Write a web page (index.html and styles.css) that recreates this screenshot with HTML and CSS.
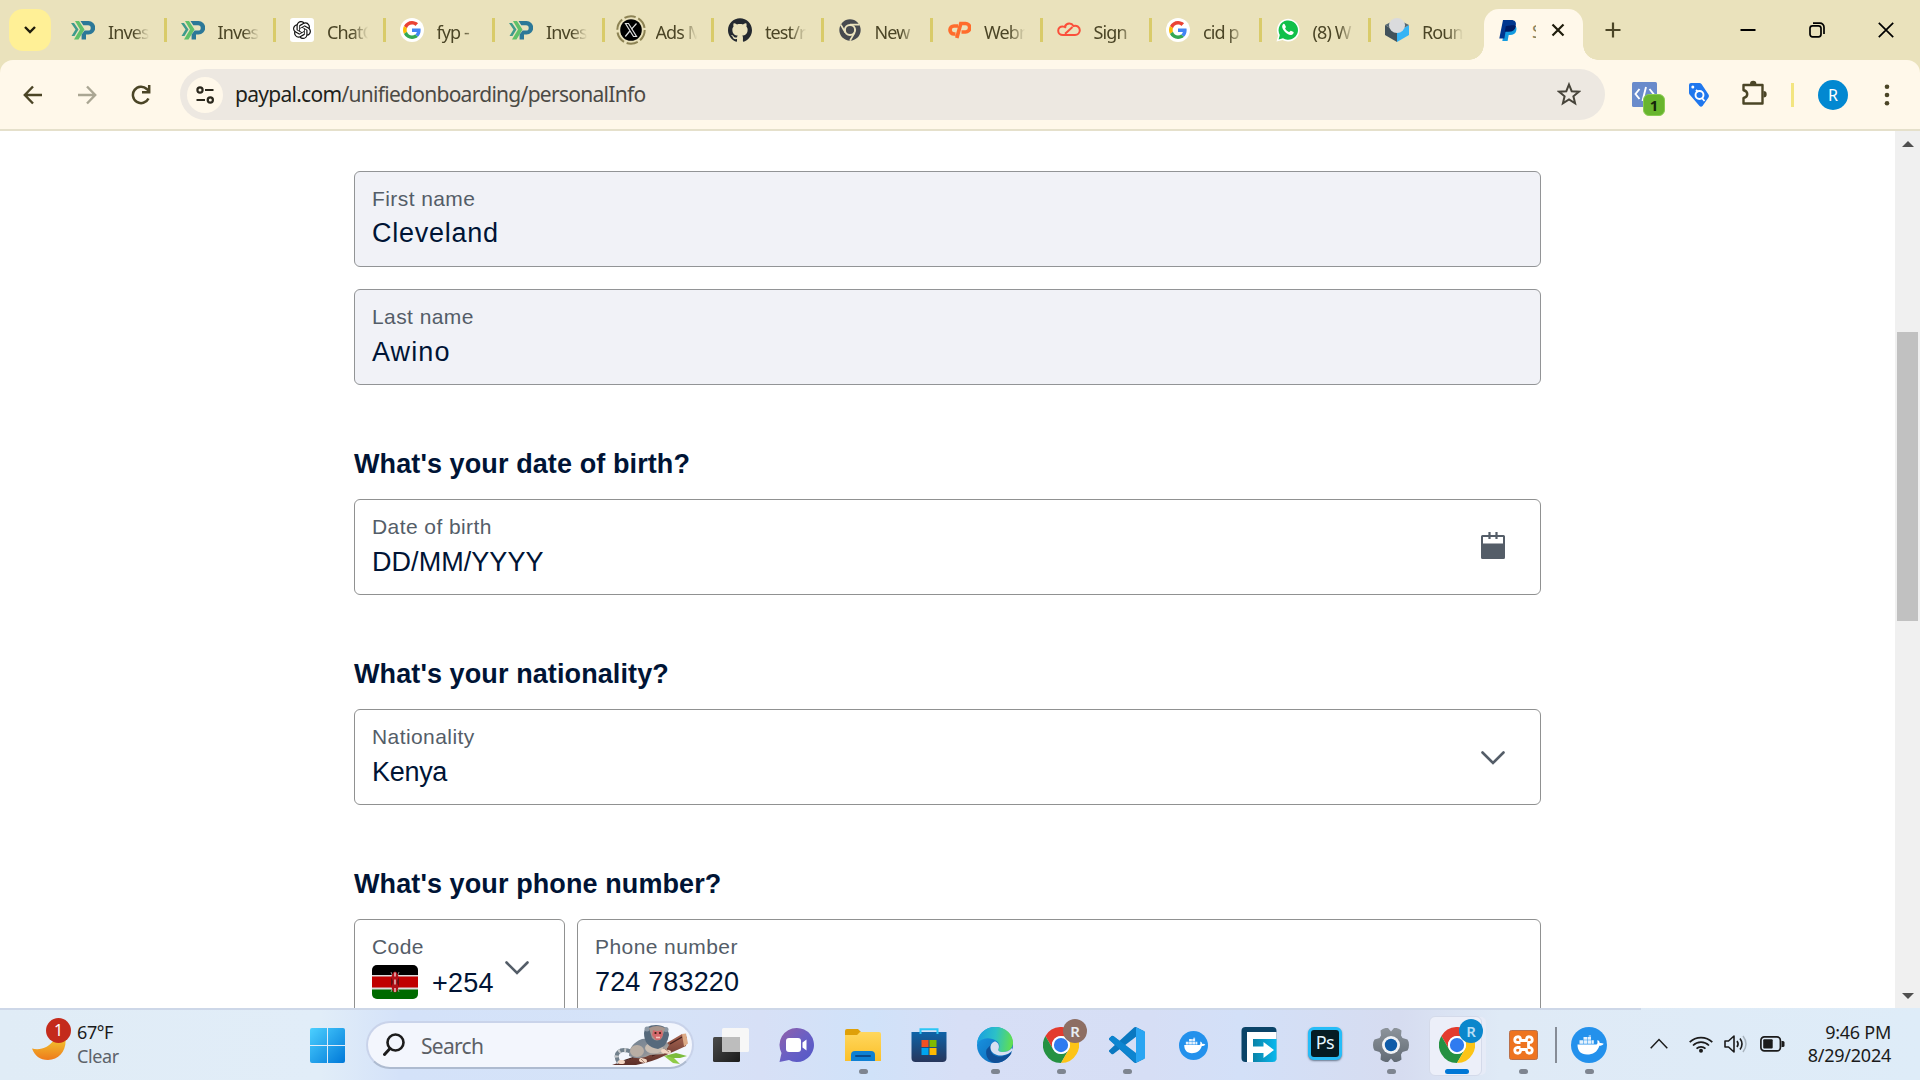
FILE: index.html
```html
<!DOCTYPE html>
<html lang="en">
<head>
<meta charset="utf-8">
<title>PayPal - Personal info</title>
<link rel="stylesheet" href="styles.css">
</head>
<body>
<svg class="defs" width="0" height="0" aria-hidden="true">
  <defs>
    <linearGradient id="g-win" x1="0" y1="0" x2="1" y2="1"><stop offset="0" stop-color="#4cd0ff"/><stop offset="1" stop-color="#0078d8"/></linearGradient>
    <linearGradient id="g-moon" x1="0" y1="0" x2="0" y2="1"><stop offset="0" stop-color="#f2c22e"/><stop offset="1" stop-color="#ee7b1c"/></linearGradient>
    <linearGradient id="g-chat" x1="0" y1="0" x2="1" y2="1"><stop offset="0" stop-color="#9360a8"/><stop offset=".5" stop-color="#6a5fc4"/><stop offset="1" stop-color="#5258c8"/></linearGradient>
    <linearGradient id="g-folder" x1="0" y1="0" x2="0" y2="1"><stop offset="0" stop-color="#ffd75e"/><stop offset="1" stop-color="#fbc02a"/></linearGradient>
    <linearGradient id="g-store" x1="0" y1="0" x2="0" y2="1"><stop offset="0" stop-color="#0f63a8"/><stop offset="1" stop-color="#27365c"/></linearGradient>
    <linearGradient id="g-edge-a" x1="0" y1=".4" x2="1" y2=".5"><stop offset="0" stop-color="#1a9fe0"/><stop offset=".5" stop-color="#2cc0c8"/><stop offset="1" stop-color="#62e04c"/></linearGradient>
    <linearGradient id="g-edge-b" x1="0" y1="0" x2="1" y2="1"><stop offset="0" stop-color="#1a9be8"/><stop offset="1" stop-color="#0c5fae"/></linearGradient>
    <linearGradient id="g-fx" x1="0" y1="0" x2="1" y2="0"><stop offset="0" stop-color="#0a83a8"/><stop offset="1" stop-color="#08b8ee"/></linearGradient>
    <linearGradient id="g-dark" x1="0" y1="0" x2="1" y2="1"><stop offset="0" stop-color="#4b4b4b"/><stop offset="1" stop-color="#1b1b1b"/></linearGradient>
    <linearGradient id="g-gear" x1="0" y1="0" x2="0" y2="1"><stop offset="0" stop-color="#8d949b"/><stop offset="1" stop-color="#626b75"/></linearGradient>
    <linearGradient id="g-bark" x1="0" y1="0" x2="0" y2="1"><stop offset="0" stop-color="#a86552"/><stop offset="1" stop-color="#5c2f28"/></linearGradient>
    <linearGradient id="g-fur" x1="0" y1="0" x2="1" y2="1"><stop offset="0" stop-color="#6f8091"/><stop offset=".6" stop-color="#8d9198"/><stop offset="1" stop-color="#e0c5a8"/></linearGradient>
  </defs>
  <symbol id="i-invest" viewBox="0 0 24 24">
    <path d="M0 5h3l4.500 6.500L3.500 18H.5l4-6.500z" fill="#3f9a8c"/><path d="M4 3h4l5.500 8.500L7.500 21.500H3l6-10z" fill="#5fc06a"/>
    <path d="M9.500 3H17.500a6.700 6.700 0 0 1 0 13.400H15V21.500h-4.400v-5l3-4h3.500a2.600 2.600 0 0 0 0-5.200H12.300z" fill="#2c7898"/>
  </symbol>
  <symbol id="i-gpt" viewBox="-4 -4 32 32">
    <rect x="-4" y="-4" width="32" height="32" rx="4" fill="#fff"/>
    <path fill="#111" d="M22.2819 9.8211a5.9847 5.9847 0 0 0-.5157-4.9108 6.0462 6.0462 0 0 0-6.5098-2.9A6.0651 6.0651 0 0 0 4.9807 4.1818a5.9847 5.9847 0 0 0-3.9977 2.9 6.0462 6.0462 0 0 0 .7427 7.0966 5.98 5.98 0 0 0 .511 4.9107 6.051 6.051 0 0 0 6.5146 2.9001A5.9847 5.9847 0 0 0 13.2599 24a6.0557 6.0557 0 0 0 5.7718-4.2058 5.9894 5.9894 0 0 0 3.9977-2.9001 6.0557 6.0557 0 0 0-.7475-7.0729zm-9.022 12.6081a4.4755 4.4755 0 0 1-2.8764-1.0408l.1419-.0804 4.7783-2.7582a.7948.7948 0 0 0 .3927-.6813v-6.7369l2.02 1.1686a.071.071 0 0 1 .038.052v5.5826a4.504 4.504 0 0 1-4.4945 4.4944zm-9.6607-4.1254a4.4708 4.4708 0 0 1-.5346-3.0137l.142.0852 4.783 2.7582a.7712.7712 0 0 0 .7806 0l5.8428-3.3685v2.3324a.0804.0804 0 0 1-.0332.0615L9.74 19.9502a4.4992 4.4992 0 0 1-6.1408-1.6464zM2.3408 7.8956a4.485 4.485 0 0 1 2.3655-1.9728V11.6a.7664.7664 0 0 0 .3879.6765l5.8144 3.3543-2.0201 1.1685a.0757.0757 0 0 1-.071 0l-4.8303-2.7865A4.504 4.504 0 0 1 2.3408 7.872zm16.5963 3.8558L13.1038 8.364 15.1192 7.2a.0757.0757 0 0 1 .071 0l4.8303 2.7913a4.4944 4.4944 0 0 1-.6765 8.1042v-5.6772a.79.79 0 0 0-.407-.667zm2.0107-3.0231l-.142-.0852-4.7735-2.7818a.7759.7759 0 0 0-.7854 0L9.409 9.2297V6.8974a.0662.0662 0 0 1 .0284-.0615l4.8303-2.7866a4.4992 4.4992 0 0 1 6.6802 4.66zM8.3065 12.863l-2.02-1.1638a.0804.0804 0 0 1-.038-.0567V6.0742a4.4992 4.4992 0 0 1 7.3757-3.4537l-.142.0805L8.704 5.459a.7948.7948 0 0 0-.3927.6813zm1.0976-2.3654l2.602-1.4998 2.6069 1.4998v2.9994l-2.5974 1.4997-2.6067-1.4997Z"/>
  </symbol>
  <symbol id="i-google" viewBox="-8 -8 64 64">
    <circle cx="24" cy="24" r="32" fill="#fff"/>
    <path fill="#EA4335" d="M24 9.500c3.540 0 6.710 1.220 9.210 3.600l6.850-6.850C35.900 2.380 30.470 0 24 0 14.620 0 6.510 5.380 2.560 13.220l7.980 6.190C12.430 13.720 17.740 9.500 24 9.500z"/>
    <path fill="#4285F4" d="M46.980 24.550c0-1.570-.15-3.090-.38-4.550H24v9.020h12.940c-.58 2.960-2.260 5.480-4.780 7.180l7.730 6c4.510-4.180 7.090-10.360 7.090-17.650z"/>
    <path fill="#FBBC05" d="M10.530 28.590c-.48-1.450-.76-2.990-.76-4.590s.27-3.140.76-4.590l-7.980-6.190C.92 16.460 0 20.120 0 24c0 3.880.92 7.540 2.560 10.780l7.970-6.190z"/>
    <path fill="#34A853" d="M24 48c6.480 0 11.930-2.130 15.890-5.810l-7.730-6c-2.150 1.450-4.920 2.300-8.160 2.300-6.260 0-11.570-4.220-13.470-9.910l-7.980 6.190C6.510 42.620 14.620 48 24 48z"/>
  </symbol>
  <symbol id="i-x" viewBox="0 0 30 30">
    <circle cx="15" cy="15" r="13.700" fill="none" stroke="#8d8354" stroke-width="2" stroke-dasharray="11.500 2.850"/>
    <circle cx="15" cy="15" r="10.800" fill="#000"/>
    <path d="M9.500 8.500h3l8 13h-3z" fill="none" stroke="#ddd" stroke-width="1.200"/><path d="M20.500 8.500l-5 5.600M13.800 16l-4.500 5.500" stroke="#ddd" stroke-width="1.200"/>
  </symbol>
  <symbol id="i-github" viewBox="0 0 24 24">
    <path fill="#24292f" d="M12 .297c-6.630 0-12 5.373-12 12 0 5.303 3.438 9.800 8.205 11.385.6.113.82-.258.82-.577 0-.285-.01-1.040-.015-2.040-3.338.724-4.042-1.610-4.042-1.610C4.422 18.070 3.633 17.700 3.633 17.700c-1.087-.744.084-.729.084-.729 1.205.084 1.838 1.236 1.838 1.236 1.070 1.835 2.809 1.305 3.495.998.108-.776.417-1.305.76-1.605-2.665-.3-5.466-1.332-5.466-5.930 0-1.310.465-2.380 1.235-3.220-.135-.303-.54-1.523.105-3.176 0 0 1.005-.322 3.300 1.230.96-.267 1.980-.399 3-.405 1.020.006 2.040.138 3 .405 2.280-1.552 3.285-1.230 3.285-1.230.645 1.653.24 2.873.12 3.176.765.84 1.230 1.910 1.230 3.220 0 4.610-2.805 5.625-5.475 5.920.42.36.81 1.096.81 2.220 0 1.606-.015 2.896-.015 3.286 0 .315.21.69.825.57C20.565 22.092 24 17.592 24 12.297c0-6.627-5.373-12-12-12"/>
  </symbol>
  <symbol id="i-chrome-mono" viewBox="-3 -3 54 54">
    <circle cx="24" cy="24" r="24" fill="#474a4f"/>
    <circle cx="24" cy="24" r="11.500" fill="none" stroke="#ebe3be" stroke-width="4.500"/>
    <path d="M24 12H45M13.600 30L3.200 12M34.400 30L24 48" stroke="#ebe3be" stroke-width="4"/>
  </symbol>
  <symbol id="i-cpanel" viewBox="0 0 24 24">
    <path d="M11 8H7a4 4 0 0 0 0 8h1.500M9.800 20l4-14.500h4.700a3.600 3.600 0 0 1 0 8.500H14.500" fill="none" stroke="#ff6c2c" stroke-width="3.700"/>
  </symbol>
  <symbol id="i-cloud" viewBox="0 0 24 24">
    <path d="M15.500 9c-2.500 2-4.500 4.500-7.500 6.800M8 8.500C9.500 4.800 14.500 4.500 16.500 8c3.500-1 6.300 1.200 6.300 4.300 0 2.700-2 4.700-4.800 4.700H6C3 17 1.200 15 1.200 12.700 1.200 10 3.200 8.300 6 8.500c1 0 2 .3 3 1.300" fill="none" stroke="#fb4f3a" stroke-width="2"/>
  </symbol>
  <symbol id="i-whatsapp" viewBox="0 0 24 24">
    <path d="M.5 23.500l1.700-6A11.300 11.300 0 1 1 6.600 22z" fill="#fff"/>
    <path d="M2.600 21.500l1.200-4.600A9.700 9.700 0 1 1 7 20.300z" fill="#10c049"/>
    <path d="M8.800 6.500c-.5-1-1-.8-1.500-.4-2.500 2.400-.2 5.800 1.500 7.600 1.900 2 4.300 3.600 6.500 3.300 1.800-.3 2.600-1.900 2.300-2.900l-2.700-1.400c-.6-.2-1.200 1.300-1.700 1.300-.9 0-3.700-2.300-4.100-3.500 0-.5 1-1.300.8-1.800z" fill="#fff"/>
  </symbol>
  <symbol id="i-cube" viewBox="0 0 24 24">
    <path d="M0 7l12 7v10L0 17z" fill="#42525b"/><path d="M24 7l-12 7v10l12-7z" fill="#36b4f5"/><path d="M0 7l6-3 12 0 6 3-12 7z" fill="#566873"/>
    <ellipse cx="12" cy="7.500" rx="8" ry="7.500" fill="#dadbdd"/>
  </symbol>
  <symbol id="i-paypal" viewBox="0 0 24 24">
    <path d="M9.500 7h8c3.300.7 3.400 4 2.600 6.200-.8 2.600-3 3.800-6 3.800h-1.400L11.600 23H6.300z" fill="#139be0"/>
    <path d="M7 2h8.200c3.600 0 5.300 2.100 4.600 5.300-.8 3.800-3.300 5.500-7 5.500H9.700L8.400 20.500H3.300z" fill="#00368f"/>
    <path d="M9.800 8.200l-1 5.600h3.800c4 0 6.500-1.900 7.200-5.600-1-1.200-3-1.300-10-0z" fill="#001c64"/>
  </symbol>
  <symbol id="i-chrome" viewBox="0 0 48 48">
    <path d="M24 12H44.800A24 24 0 0 0 3.200 12L13.600 30A12 12 0 0 1 24 12z" fill="#e33b2e"/>
    <path d="M13.600 30L3.200 12A24 24 0 0 0 24 48L34.400 30A12 12 0 0 1 13.600 30z" fill="#259142"/>
    <path d="M34.400 30L24 48A24 24 0 0 0 44.800 12H24A12 12 0 0 1 34.400 30z" fill="#fcc417"/>
    <circle cx="24" cy="24" r="12" fill="#fff"/><circle cx="24" cy="24" r="9.500" fill="#2f7bf0"/>
  </symbol>
  <symbol id="i-docker" viewBox="0 0 36 36">
    <circle cx="18" cy="18" r="18" fill="#2391ec"/>
    <path d="M6.500 17.500h18.800c.8-.3 1.300-1.100 1.200-2.300-.1-.9-.3-1.500.3-2.200 1.300.8 1.900 1.800 1.900 3 1.300-.2 2.600 0 4 .7-1 1.500-2.500 2-4.300 2-2.200 6.500-6.400 8.800-12.400 8.800-6.200 0-9.500-3.500-9.500-10z" fill="#fff"/>
    <path d="M8.500 13.200h3.500v3.500H8.500zM12.500 13.200H16v3.500h-3.500zM16.500 13.200H20v3.500h-3.500zM20.500 13.200h2.300v3.500h-2.300zM12.500 10H16v2.700h-3.500zM16.500 10H20v2.700h-3.500zM17.700 8.500H20v1h-2.300z" fill="#e6f2fd"/>
  </symbol>
  <symbol id="i-chevron" viewBox="0 0 24 14"><path d="M1.500 1.500L12 12 22.500 1.500" fill="none" stroke="#545d68" stroke-width="2.600" stroke-linecap="round"/></symbol>
</svg>

<div class="screen">
  <header class="tabstrip">
    <button class="tabsearch"><svg width="14" height="10" viewBox="0 0 14 10"><path d="M2 2l5 5 5-5" fill="none" stroke="#1f1c0c" stroke-width="2.400"/></svg></button>
    <nav class="tabs">
      <div class="tab"><svg class="fav"><use href="#i-invest"/></svg><span>Inves</span></div>
      <div class="tab"><svg class="fav"><use href="#i-invest"/></svg><span>Inves</span></div>
      <div class="tab"><svg class="fav"><use href="#i-gpt"/></svg><span>ChatG</span></div>
      <div class="tab"><svg class="fav"><use href="#i-google"/></svg><span>fyp -</span></div>
      <div class="tab"><svg class="fav"><use href="#i-invest"/></svg><span>Inves</span></div>
      <div class="tab"><svg class="fav big"><use href="#i-x"/></svg><span>Ads M</span></div>
      <div class="tab"><svg class="fav"><use href="#i-github"/></svg><span>test/r</span></div>
      <div class="tab"><svg class="fav"><use href="#i-chrome-mono"/></svg><span>New</span></div>
      <div class="tab"><svg class="fav"><use href="#i-cpanel"/></svg><span>Webn</span></div>
      <div class="tab"><svg class="fav"><use href="#i-cloud"/></svg><span>Sign</span></div>
      <div class="tab"><svg class="fav"><use href="#i-google"/></svg><span>cid p</span></div>
      <div class="tab"><svg class="fav"><use href="#i-whatsapp"/></svg><span>(8) W</span></div>
      <div class="tab last"><svg class="fav"><use href="#i-cube"/></svg><span>Roun</span></div>
    </nav>
    <div class="tab-active">
      <svg class="fav"><use href="#i-paypal"/></svg><span class="sliver">S</span>
      <svg class="tab-close" width="14" height="14" viewBox="0 0 14 14"><path d="M1.500 1.500l11 11M12.500 1.500l-11 11" stroke="#1f1c0c" stroke-width="2.200"/></svg>
    </div>
    <svg class="newtab" width="16" height="16" viewBox="0 0 16 16"><path d="M8 .5v15M.5 8h15" stroke="#4b4526" stroke-width="2.200"/></svg>
    <div class="winctl">
      <svg width="16" height="16" viewBox="0 0 16 16"><path d="M.5 8h15" stroke="#000" stroke-width="2"/></svg>
      <svg width="16" height="16" viewBox="0 0 16 16"><rect x="1" y="3.800" width="11" height="11" rx="2.500" fill="none" stroke="#000" stroke-width="1.700"/><path d="M4 1.200h7a4 4 0 0 1 4 4V12" fill="none" stroke="#000" stroke-width="1.700"/></svg>
      <svg width="16" height="16" viewBox="0 0 16 16"><path d="M.8.8l14.400 14.400M15.200.8L.8 15.200" stroke="#000" stroke-width="1.700"/></svg>
    </div>
  </header>

  <div class="toolbar-wrap">
  <div class="toolbar">
    <div class="navbtns">
      <svg width="20" height="20" viewBox="0 0 20 20"><path d="M19 10H2M10 1.500L1.800 10l8.200 8.500" fill="none" stroke="#4b4526" stroke-width="2.400"/></svg>
      <svg width="20" height="20" viewBox="0 0 20 20"><path d="M1 10h17M10 1.500l8.200 8.500-8.200 8.500" fill="none" stroke="#aaa693" stroke-width="2.400"/></svg>
      <svg width="20" height="20" viewBox="0 0 20 20"><path d="M17.500 13.500A8.200 8.200 0 1 1 15.800 4l2 2.200M18.200 0v7.200H11" fill="none" stroke="#4b4526" stroke-width="2.500"/></svg>
    </div>
    <div class="omnibox">
      <div class="siteinfo"><svg width="20" height="20" viewBox="0 0 20 20"><circle cx="5" cy="5" r="2.600" fill="none" stroke="#2b281d" stroke-width="2.200"/><path d="M10 5h8.500M1.500 15H10" stroke="#2b281d" stroke-width="2.200"/><circle cx="15.300" cy="15" r="2.600" fill="none" stroke="#2b281d" stroke-width="2.200"/></svg></div>
      <div class="url">paypal.com<span>/unifiedonboarding/personalInfo</span></div>
      <svg width="24" height="24" viewBox="0 0 24 24"><path d="M12 2.500l2.700 6.700 7.100.5-5.400 4.600 1.700 7L12 17.500l-6.100 3.800 1.700-7L2.200 9.700l7.100-.5z" fill="none" stroke="#47443a" stroke-width="2"/></svg>
    </div>
    <div class="ext">
      <div class="ext-code">
        <svg width="25" height="25" viewBox="0 0 25 25"><rect width="25" height="25" rx="1.500" fill="#6a8bcb"/><path d="M7.500 7l-4 5 4 5M17.500 7l4 5-4 5M14 5l-3.500 14" fill="none" stroke="#fff" stroke-width="1.900"/></svg>
        <b>1</b>
      </div>
      <svg class="ext-tag" width="22" height="26" viewBox="0 0 22 26"><path d="M1 3Q1 1 3 1h8.500q1 0 2 1L20.500 12.500q1 1.500 0 3l-6 8.500q-1.500 1.500-3 0L2 13q-1-1-1-2z" fill="#1f77ee"/><circle cx="4.800" cy="5" r="1.500" fill="#fff"/><circle cx="11.500" cy="13" r="4" fill="none" stroke="#fff" stroke-width="1.900"/><path d="M8 8l2 2M14 16l2.500 3" stroke="#fff" stroke-width="1.800"/></svg>
      <svg class="ext-puzzle" width="26" height="26" viewBox="0 0 26 26"><path d="M2.500 5H21.500V23.500H2.500V18c5-.8 5-7 0-7.800z" fill="none" stroke="#4b4526" stroke-width="2.400" stroke-linejoin="round"/><path d="M9 4a3.200 3.200 0 0 1 6.400 0zM22.500 11a3.200 3.200 0 0 1 0 6.400z" fill="#4b4526"/></svg>
      <i class="ext-sep"></i>
      <div class="avatar">R</div>
      <svg class="dots" width="6" height="22" viewBox="0 0 6 22"><g fill="#4b4526"><circle cx="3" cy="2.700" r="2.300"/><circle cx="3" cy="11" r="2.300"/><circle cx="3" cy="19.300" r="2.300"/></g></svg>
    </div>
  </div>
  </div>

  <main class="viewport">
    <form class="form">
      <div class="field disabled"><label>First name</label><div class="value first">Cleveland</div></div>
      <div class="field disabled second"><label>Last name</label><div class="value last-name">Awino</div></div>
      <h2>What's your date of birth?</h2>
      <div class="field with-icon">
        <div><label>Date of birth</label><div class="value dob">DD/MM/YYYY</div></div>
        <svg width="24" height="27" viewBox="0 0 24 27"><path d="M1.500 3h21q1.500 0 1.500 1.500v21q0 1.500-1.500 1.500h-21Q0 27 0 25.500v-21Q0 3 1.500 3zM2 5v6.500h20V5z" fill="#545d68" fill-rule="evenodd"/><path d="M8.500 0v7M15.500 0v7" stroke="#545d68" stroke-width="2.200"/></svg>
      </div>
      <h2>What's your nationality?</h2>
      <div class="field with-icon">
        <div><label>Nationality</label><div class="value country">Kenya</div></div>
        <svg width="24" height="14"><use href="#i-chevron"/></svg>
      </div>
      <h2>What's your phone number?</h2>
      <div class="phone">
        <div class="field code">
          <div>
            <label>Code</label>
            <div class="dial">
              <svg width="46" height="34" viewBox="0 0 46 34"><defs><clipPath id="flag"><rect width="46" height="34" rx="5"/></clipPath></defs><g clip-path="url(#flag)"><path d="M0 0h46v34H0z" fill="#ddd"/><path d="M0 0h46v10H0z" fill="#000"/><path d="M0 11.500h46v11H0z" fill="#c00000"/><path d="M0 24.500h46V34H0z" fill="#006a00"/><path d="M19 7l8 20M27 7l-8 20" stroke="#aaa" stroke-width=".8"/><ellipse cx="23" cy="17" rx="4" ry="10.500" fill="#b01018"/><path d="M19.500 12.500q2 4.500 0 9zM26.500 12.500q-2 4.500 0 9z" fill="#111"/><path d="M23 7.500v4M23 14.500v5M23 23v4" stroke="#e5b8b8" stroke-width="1.600"/></g></svg>
              <span class="value">+254</span>
            </div>
          </div>
          <svg class="code-chev" width="24" height="14"><use href="#i-chevron"/></svg>
        </div>
        <div class="field number"><label>Phone number</label><div class="value">724 783220</div></div>
      </div>
    </form>
    <div class="scrollbar">
      <svg width="12" height="6" viewBox="0 0 12 6"><path d="M0 6l6-6 6 6z" fill="#505050"/></svg>
      <div class="track"><div class="thumb"></div></div>
      <svg width="12" height="6" viewBox="0 0 12 6"><path d="M0 0l6 6 6-6z" fill="#505050"/></svg>
    </div>
  </main>

  <footer class="taskbar">
    <div class="weather">
      <div class="moon"><svg width="34" height="22" viewBox="0 0 34 22"><path d="M0 9.500C8 11.500 17 9 22.500 0H33.500C34.500 12 27 21 16 21 8 21 2.500 16.500 0 9.500z" fill="url(#g-moon)"/></svg><b>1</b></div>
      <div class="wtext"><span>67°F</span><span class="dim">Clear</span></div>
    </div>
    <svg class="start" width="35" height="35" viewBox="0 0 35 35"><path d="M2 0h15v17H0V2q0-2 2-2zM18 0h15q2 0 2 2v15H18zM0 18h17v17H2q-2 0-2-2zM18 18h17v15q0 2-2 2H18z" fill="url(#g-win)"/></svg>
    <div class="search">
      <svg width="22" height="24" viewBox="0 0 22 24"><circle cx="12.500" cy="9.500" r="8" fill="none" stroke="#1c1c1c" stroke-width="2.600"/><path d="M7 15.500l-5.500 6" stroke="#1c1c1c" stroke-width="3" stroke-linecap="round"/></svg>
      <span>Search</span>
      <svg class="monkey" width="76" height="41" viewBox="0 0 76 41">
        <path d="M52 31l12-3 11 3-7 2-9 0z" fill="#7cbc3c"/><path d="M52 31l10 2 6 6-7-1z" fill="#8fcb45"/>
        <path d="M0 40Q30 30 48 22L70 9l5 3-1 9-22 10Q40 37 24 40z" fill="url(#g-bark)"/>
        <path d="M5 38l38-13M58 19l12-7M40 31l16-7" stroke="#41201c" stroke-width="1.300"/><path d="M70 9l4-.5 2 10-4 3z" fill="#dcaa86"/>
        <path d="M20 27C8 22 1 28 7 38" fill="none" stroke="#71808c" stroke-width="4"/><path d="M20 27C8 22 1 28 7 38" fill="none" stroke="#c6c9cc" stroke-width="4" stroke-dasharray="2 4"/>
        <path d="M17 31Q17 19 30 14L50 12 57 20 52 29 38 30Q28 36 17 31z" fill="url(#g-fur)"/>
        <ellipse cx="25" cy="26" rx="7" ry="6" fill="#b9aea4"/><ellipse cx="42" cy="23" rx="9" ry="5.500" fill="#c9bdb2"/>
        <path d="M32 8Q33 0 44 0q12 0 13 10-2 12-11 14-14-2-14-16z" fill="#56697c"/><circle cx="35" cy="4" r="2.500" fill="#8b97a3"/><circle cx="54" cy="4.500" r="2.500" fill="#8b97a3"/>
        <path d="M37 3q8-4 16 0l-3 10q-5 5-10 0z" fill="#a8958c"/><path d="M41 5q4.500 2 9 0l1 5-3 5h-4l-4-5z" fill="#d4696c"/>
        <circle cx="43.500" cy="8" r="1.100" fill="#3b1c10"/><circle cx="48" cy="8" r="1.100" fill="#3b1c10"/><path d="M44 12.500h4" stroke="#f4c5bd" stroke-width="1.600"/>
        <path d="M51 26l6 1M29 35l4 1M8 37h3" stroke="#f2d6c3" stroke-width="4" stroke-linecap="round"/><path d="M53 24l4 3M29 34l4 4" stroke="#a98474"/>
      </svg>
    </div>
    <div class="apps">
      <div class="app"><svg width="36" height="36" viewBox="0 0 36 36"><rect x="0" y="10" width="27" height="25" rx="1.500" fill="url(#g-dark)"/><rect x="9" y="1" width="27" height="24" rx="1.500" fill="#f7f7f7"/><path d="M9 10h18v15H10.500Q9 25 9 23.500z" fill="#bdbdbd"/></svg></div>
      <div class="app"><svg width="36" height="36" viewBox="0 0 36 36"><path d="M17.500 1A17 17 0 1 1 10 33L.5 35 2.500 26A17 17 0 0 1 17.500 1z" fill="url(#g-chat)"/><rect x="7" y="11" width="15" height="14" rx="3" fill="#fff"/><path d="M23.500 15.500l4-3v11l-4-3z" fill="#fff"/></svg></div>
      <div class="app run"><svg width="36" height="36" viewBox="0 0 36 36"><path d="M2 2h11l3 3v5H0V4q0-2 2-2z" fill="#dfa008"/><path d="M15 5h19q2 0 2 2v27H0V8h12z" fill="url(#g-folder)"/><path d="M6 34v-6q0-4 4-4h16q4 0 4 4v6z" fill="#0e80d4"/><path d="M11 29h14" stroke="#0a4a8c" stroke-width="2" stroke-linecap="round"/></svg></div>
      <div class="app"><svg width="36" height="36" viewBox="0 0 36 36"><path d="M.5 5h35v26q0 4-4 4h-27q-4 0-4-4z" fill="url(#g-store)"/><path d="M9.500 7V2.200h17V7" fill="none" stroke="#2cc6f5" stroke-width="2"/><path d="M10.500 13h7v7h-7z" fill="#f25022"/><path d="M18.500 13h7v7h-7z" fill="#7fba00"/><path d="M10.500 21h7v7h-7z" fill="#00a4ef"/><path d="M18.500 21h7v7h-7z" fill="#ffb900"/></svg></div>
      <div class="app run"><svg width="36" height="36" viewBox="0 0 36 36"><circle cx="18" cy="18" r="18" fill="url(#g-edge-b)"/><path d="M0 17C1 6 9 0 18 0 29 0 36 7.500 36 15.500 36 22 31 25 26 25c-4 0-5.500-1.500-4.500-3C24 18 21 13.500 15.500 12 9 10 3 12 0 17z" fill="url(#g-edge-a)"/><path d="M14 17.500C11 25 18 31 25 29.500c4-.7 6.500-2 9-4l.5.500C31 32 25 36 18 36 11 35 8 28 9.500 22.500z" fill="#104f97"/><path d="M21.500 22c1-2.500.5-6-3-7.500-2.500 0-5 2.500-5 6 0 5.500 6 8.500 11.500 8 5-.5 8-2.500 11-5.500l-1-2c-3 3-6 4-9 4-4 0-5.500-1.500-4.500-3z" fill="#d8e0f2"/></svg></div>
      <div class="app run"><svg width="36" height="36"><use href="#i-chrome"/></svg><b class="prof brown">R</b></div>
      <div class="app run"><svg width="36" height="36" viewBox="0 0 24 24"><path fill="#0a78c0" d="M23.150 2.587L18.210.21a1.494 1.494 0 0 0-1.705.29l-9.460 8.630-4.120-3.128a.999.999 0 0 0-1.276.057L.327 7.261A1 1 0 0 0 .326 8.740L3.899 12 .326 15.260a1 1 0 0 0 .001 1.479L1.650 17.940a.999.999 0 0 0 1.276.057l4.120-3.128 9.460 8.630a1.492 1.492 0 0 0 1.704.29l4.942-2.377A1.500 1.500 0 0 0 24 20.060V3.939a1.500 1.500 0 0 0-.85-1.352zm-5.146 14.861L10.826 12l7.178-5.448v10.896z"/><path d="M18 .1l5.200 2.500q.8.4.8 1.300v16.200q0 .9-.8 1.300L18 23.900z" fill="#2aa5f2"/><path d="M.3 8.700L18 24V17.400L2.900 6 .5 7.200z" fill="#0f8ad6" opacity=".75"/></svg></div>
      <div class="app"><svg width="29" height="29"><use href="#i-docker"/></svg></div>
      <div class="app"><svg width="36" height="36" viewBox="0 0 36 36"><rect x="0.500" y="0" width="35" height="35" rx="4" fill="#0b4468"/><path d="M6 5h29.500v26q0 4-4 4H6z" fill="#fff"/><path d="M12 12h23.500v19q0 4-4 4H12z" fill="url(#g-fx)"/><path d="M12 19.500h10.500V15l10.500 8-10.500 8v-5H12z" fill="#fff"/></svg></div>
      <div class="app"><div class="ps">Ps</div></div>
      <div class="app run"><svg width="36" height="36" viewBox="0 0 36 36"><path d="M13.500 1h1.500l3 3.500L21 1h2.500q3 .8 5 2.500l-.5 5 1.500 2.500 5 1.500q1.500 2 1.500 5.500t-1.500 5.500l-5 1.500-1.500 2.500.5 5q-2 1.700-5 2.500H21l-3-3.500-3 3.500h-2.500q-3-.8-5-2.500l.5-5L6.500 25l-5-1.500Q0 21.500 0 18t1.500-5.500l5-1.500L8 8.500l-.5-5q2-1.700 5-2.500z" fill="url(#g-gear)"/><circle cx="18" cy="18" r="9" fill="#f0f2f5"/><circle cx="18" cy="18" r="6.200" fill="#0e5ba8"/></svg></div>
      <div class="app active"><svg width="36" height="36"><use href="#i-chrome"/></svg><b class="prof blue">R</b></div>
      <div class="app run"><svg width="29" height="30" viewBox="0 0 29 30"><rect x=".5" y=".5" width="28" height="29" rx="2" fill="#ee7420" stroke="#b9704a"/><path d="M11.500 12.500H8a2.900 2.900 0 1 1 3.500-3.500v1.500h6V9A2.900 2.900 0 1 1 21 12.500h-1.500v5H21a2.900 2.900 0 1 1-3.500 3.500v-1.500h-6V21A2.900 2.900 0 1 1 8 17.500h3.500" fill="none" stroke="#fff" stroke-width="2.800" stroke-linejoin="round"/></svg></div>
      <i class="app-sep"></i>
      <div class="app run"><svg width="36" height="36"><use href="#i-docker"/></svg></div>
    </div>
    <div class="tray">
      <svg class="t-caret" width="18" height="11" viewBox="0 0 18 11"><path d="M.7 10.200L9 1.500l8.300 8.700" fill="none" stroke="#1b1b1b" stroke-width="1.500"/></svg>
      <svg class="t-wifi" width="24" height="18" viewBox="0 0 24 18"><g fill="none" stroke="#1b1b1b" stroke-width="1.700"><path d="M.7 7.200a16 16 0 0 1 22.600 0M4 10.500a11.300 11.300 0 0 1 16 0M7.500 13.700a6.500 6.500 0 0 1 9 0"/></g><circle cx="12" cy="15.800" r="2" fill="#1b1b1b"/></svg>
      <svg class="t-vol" width="24" height="20" viewBox="0 0 24 20"><g fill="none" stroke="#1b1b1b" stroke-width="1.600" stroke-linejoin="round"><path d="M1 7h3.500L10 2v16l-5.500-5H1z"/><path d="M13 7q2.200 3 0 6M16 4.500q4 5.500 0 11"/></g><path d="M19 2q6 8 0 16" fill="none" stroke="#a9b4be" stroke-width="1.500"/></svg>
      <svg class="t-bat" width="25" height="16" viewBox="0 0 25 16"><rect x=".9" y=".9" width="19.500" height="14" rx="3.500" fill="none" stroke="#1b1b1b" stroke-width="1.700"/><rect x="3.200" y="3.300" width="9.500" height="9.300" rx="1" fill="#1b1b1b"/><path d="M21.500 5h1.500q1.500 0 1.500 1.500v3Q24.500 11 23 11h-1.500z" fill="#1b1b1b"/></svg>
      <div class="clock"><span>9:46 PM</span><span>8/29/2024</span></div>
    </div>
  </footer>
</div>
</body>
</html>
```

FILE: styles.css
```css
* { box-sizing: border-box; }
body { margin: 0; background: #fff; font-family: "Noto Sans", "Open Sans", sans-serif; }
svg { display: block; flex: none; }
.defs { position: absolute; }
.screen { width: 1920px; height: 1080px; overflow: hidden; display: flex; flex-direction: column; }

/* Tab strip */
.tabstrip { height: 60px; flex: none; background: #eae2bc; display: flex; align-items: center; }
.tabsearch { width: 42px; height: 42px; margin-left: 9px; padding: 0; border: 0; border-radius: 14px; background: #fff096; display: flex; align-items: center; justify-content: center; flex: none; }
.tabs { display: flex; margin-left: 6px; width: 1427px; flex: none; }
.tab { width: 109.5px; height: 24px; flex: none; padding-left: 14px; border-right: 3px solid #d9cb69; display: flex; align-items: center; }
.tab.last { border-right-color: transparent; }
.fav { width: 24px; height: 24px; }
.fav.big { width: 30px; height: 30px; margin: -3px; }
.tab span { margin: 3px 0 0 13px; width: 42px; white-space: nowrap; font-size: 18px; line-height: 26px; letter-spacing: -.9px; color: #4b4526; -webkit-mask-image: linear-gradient(90deg, #000 60%, transparent 98%); mask-image: linear-gradient(90deg, #000 60%, transparent 98%); }
.tab-active { position: relative; width: 99px; height: 51px; margin: 9px 0 0 0; padding: 0 0 9px 12px; background: #fff8ea; border-radius: 15px 15px 0 0; display: flex; align-items: center; flex: none; }
.tab-active::before, .tab-active::after { content: ""; position: absolute; bottom: 0; width: 15px; height: 15px; }
.tab-active::before { left: -15px; background: radial-gradient(circle at 0 0, transparent 14.5px, #fff8ea 15px); }
.tab-active::after { right: -15px; background: radial-gradient(circle at 100% 0, transparent 14.5px, #fff8ea 15px); }
.sliver { width: 4px; margin: 2px 0 0 12px; overflow: hidden; font-size: 18px; line-height: 26px; color: #8a855f; }
.tab-close { margin-left: 15px; }
.newtab { margin-left: 22px; }
.winctl { display: flex; gap: 53px; margin: 0 26px 0 auto; align-items: center; }

/* Toolbar */
.toolbar-wrap { height: 71px; flex: none; background: #eae2bc; }
.toolbar { height: 71px; background: #fff8ea; border-bottom: 2px solid #e5e0cb; border-radius: 13px 13px 0 0; display: flex; align-items: center; }
.navbtns { display: flex; gap: 34px; margin-left: 23px; width: 157px; flex: none; }
.omnibox { width: 1425px; height: 51px; border-radius: 26px; background: #ede8e1; display: flex; align-items: center; padding: 0 24px 0 7px; flex: none; }
.siteinfo { width: 36px; height: 36px; border-radius: 50%; background: #fff8ea; display: flex; align-items: center; justify-content: center; }
.url { flex: 1; margin-left: 12px; font-size: 21px; line-height: 30px; margin-top: -1px; letter-spacing: -.72px; color: #211f1a; }
.url span { color: #4c4a45; }
.omnibox > svg { margin-top: -2px; }
.ext { display: flex; align-items: center; }
.ext-code { position: relative; margin-left: 27px; }
.ext-code b { position: absolute; left: 11px; top: 12px; width: 22px; height: 22px; border: 1px solid #8acb52; border-radius: 6px; background: #68b52e; color: #14240a; font: 700 15px/21px "Noto Sans", sans-serif; text-align: center; }
.ext-tag { margin-left: 31px; }
.ext-puzzle { margin: -3px 0 0 31px; }
.ext-sep { width: 3px; height: 24px; margin-left: 24px; background: #f3e580; }
.avatar { width: 30px; height: 30px; margin-left: 24px; border-radius: 50%; background: #0288d1; color: #fff; font-size: 16px; line-height: 31px; text-align: center; }
.dots { margin-left: 36px; }

/* Page */
.viewport { height: 877px; flex: none; display: flex; justify-content: space-between; overflow: hidden; background: #fff; }
.form { width: 1187px; margin: 40px 0 0 354px; font-family: "Liberation Sans", Arial, sans-serif; color: #001435; }
.field { height: 96px; border: 1px solid #909191; border-radius: 6px; padding: 14px 17px 0; background: #fff; }
.field.disabled { background: #f1f2f7; border-color: #929496; }
.field.second { margin-top: 22px; }
.field label { display: block; font-size: 21px; line-height: 26px; letter-spacing: .42px; color: #545d68; }
.value { font-size: 27px; line-height: 36px; margin-top: 4px; letter-spacing: .6px; }
.first { margin-top: 3px; letter-spacing: .75px; }
.last-name { letter-spacing: 1.1px; }
.dob { letter-spacing: .05px; }
.country { letter-spacing: -.3px; }
h2 { margin: 61px 0 17px; font-size: 27px; line-height: 36px; font-weight: 700; letter-spacing: .1px; }
.with-icon { display: flex; justify-content: space-between; padding-right: 35px; }
.with-icon > svg { margin-top: 18px; }
.with-icon > svg[height="14"] { margin-top: 27px; }
.phone { display: flex; gap: 12px; }
.code { width: 211px; display: flex; }
.code-chev { margin: 27px 0 0 11px; }
.dial { display: flex; gap: 14px; margin-top: 5px; }
.dial .value { margin-top: 0; letter-spacing: .25px; }
.number { flex: 1; }
.number .value { letter-spacing: .15px; }
.scrollbar { width: 25px; background: #f0f0f0; display: flex; flex-direction: column; align-items: center; padding: 10px 0 9px; }
.track { flex: 1; width: 21px; }
.thumb { height: 289px; margin-top: 185px; background: #c1c1c1; }

/* Taskbar */
.taskbar { height: 72px; flex: none; display: flex; align-items: center; background: linear-gradient(180deg, #cdd7e8 2px, transparent 2px) 0 0 / 1641px 100% no-repeat, linear-gradient(90deg, #e0ecf6 0, #e1edf8 320px, #d4e2f9 400px, #d5e3f8 650px, #d7e0f6 760px, #d0e2f9 870px, #d7dff6 960px, #d6def5 1150px, #d3e0f8 1240px, #d6dcf0 1400px, #dfeaf6 1500px, #deecf8 1920px); }
.weather { display: flex; width: 278px; margin-left: 32px; }
.moon { position: relative; width: 34px; padding-top: 19px; }
.moon b { position: absolute; left: 14px; top: -2px; width: 25px; height: 25px; border-radius: 50%; background: #c42b1c; color: #fff; font-weight: 400; font-size: 16px; line-height: 24px; text-align: center; }
.wtext { margin-left: 11px; display: flex; flex-direction: column; font-size: 18px; line-height: 24px; letter-spacing: -.4px; color: #1b1b1b; }
.wtext .dim { color: #5c6269; }
.start { margin-top: 3px; }
.search { width: 328px; height: 48px; margin: 2px 0 0 21px; border: 2px solid #c9d3ea; border-bottom-color: #aebbd0; border-radius: 24px; background: #f3f6fd; display: flex; align-items: center; padding-left: 15px; }
.search span { font-size: 21px; letter-spacing: -.7px; line-height: 28px; color: #5c6066; margin: 1px 0 0 16px; }
.monkey { margin: 1px 4px 0 auto; }
.apps { display: flex; margin: 2px 0 0 4px; }
.app { position: relative; width: 66px; height: 58px; display: flex; align-items: center; justify-content: center; }
.run::after, .active::after { content: ""; position: absolute; bottom: 0; left: 28.5px; width: 9px; height: 5px; border-radius: 2.5px; background: #7e8590; }
.active::after { left: 21px; width: 24px; background: #0077d6; }
.active::before { content: ""; position: absolute; left: 5px; top: 0; width: 51px; height: 58px; border-radius: 6px; background: #eceff9; border: 1px solid #d4daea; box-shadow: 5px 0 0 -1px #e6ebf7; }
.active svg { position: relative; }
.prof { position: absolute; left: 35px; top: 3px; width: 24px; height: 24px; border-radius: 50%; color: #e8eef4; font-size: 15px; font-weight: 600; line-height: 24px; text-align: center; }
.brown { background: #8d6e63; }
.blue { background: #0b87cc; color: #b5def5; }
.app-sep { width: 2px; height: 36px; margin: 11px -1px 0; background: #868c96; }
.ps { width: 34px; height: 33px; margin-top: -3px; border: 3px solid #26bdf8; border-radius: 6px; background: #051c24; color: #e4f6ff; font-size: 18px; line-height: 25px; letter-spacing: -.5px; text-align: center; box-shadow: 0 1px 2px #68788e; }
.tray { flex: 1; display: flex; align-items: center; padding-right: 29px; color: #1b1b1b; }
.t-caret { margin: -1px 0 0 28px; }
.t-wifi { margin-left: 21px; }
.t-vol { margin-left: 11px; }
.t-bat { margin-left: 12px; }
.clock { margin-left: auto; display: flex; flex-direction: column; align-items: flex-end; font-size: 18px; line-height: 23px; letter-spacing: -.25px; }
```
